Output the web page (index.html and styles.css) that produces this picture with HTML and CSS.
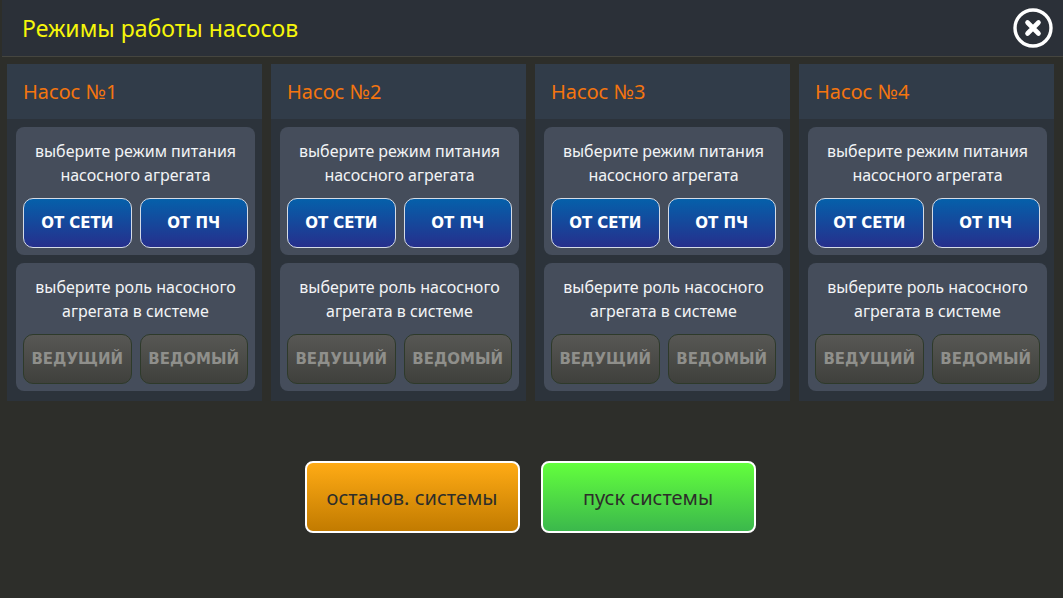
FILE: index.html
```html
<!DOCTYPE html>
<html lang="ru">
<head>
  <meta charset="UTF-8">
  <title>Режимы работы насосов</title>
  <link rel="stylesheet" href="styles.css">
</head>
<body>
  <header class="topbar">
    <h1>Режимы работы насосов</h1>
    <svg class="close" width="42" height="42" viewBox="0 0 42 42">
      <circle cx="21" cy="21" r="18" fill="none" stroke="#fff" stroke-width="3.4"/>
      <path d="M15.5 15.5 L26.5 26.5 M26.5 15.5 L15.5 26.5" stroke="#fff" stroke-width="4.6" stroke-linecap="round"/>
    </svg>
  </header>

  <div class="pumps">
    <!-- Pump 1 -->
    <section class="pump">
      <h2>Насос №1</h2>
      <div class="panel">
        <p>выберите режим питания<br>насосного агрегата</p>
        <div class="btns">
          <button class="blue">ОТ СЕТИ</button>
          <button class="blue">ОТ ПЧ</button>
        </div>
      </div>
      <div class="panel">
        <p>выберите роль насосного<br>агрегата в системе</p>
        <div class="btns">
          <button class="grey">ВЕДУЩИЙ</button>
          <button class="grey">ВЕДОМЫЙ</button>
        </div>
      </div>
    </section>

    <!-- Pump 2 -->
    <section class="pump">
      <h2>Насос №2</h2>
      <div class="panel">
        <p>выберите режим питания<br>насосного агрегата</p>
        <div class="btns">
          <button class="blue">ОТ СЕТИ</button>
          <button class="blue">ОТ ПЧ</button>
        </div>
      </div>
      <div class="panel">
        <p>выберите роль насосного<br>агрегата в системе</p>
        <div class="btns">
          <button class="grey">ВЕДУЩИЙ</button>
          <button class="grey">ВЕДОМЫЙ</button>
        </div>
      </div>
    </section>

    <!-- Pump 3 -->
    <section class="pump">
      <h2>Насос №3</h2>
      <div class="panel">
        <p>выберите режим питания<br>насосного агрегата</p>
        <div class="btns">
          <button class="blue">ОТ СЕТИ</button>
          <button class="blue">ОТ ПЧ</button>
        </div>
      </div>
      <div class="panel">
        <p>выберите роль насосного<br>агрегата в системе</p>
        <div class="btns">
          <button class="grey">ВЕДУЩИЙ</button>
          <button class="grey">ВЕДОМЫЙ</button>
        </div>
      </div>
    </section>

    <!-- Pump 4 -->
    <section class="pump">
      <h2>Насос №4</h2>
      <div class="panel">
        <p>выберите режим питания<br>насосного агрегата</p>
        <div class="btns">
          <button class="blue">ОТ СЕТИ</button>
          <button class="blue">ОТ ПЧ</button>
        </div>
      </div>
      <div class="panel">
        <p>выберите роль насосного<br>агрегата в системе</p>
        <div class="btns">
          <button class="grey">ВЕДУЩИЙ</button>
          <button class="grey">ВЕДОМЫЙ</button>
        </div>
      </div>
    </section>
  </div>

  <div class="actions">
    <button class="stop">останов. системы</button>
    <button class="start">пуск системы</button>
  </div>
</body>
</html>
```

FILE: styles.css
```css
html, body {
  height: 100%;
}

body {
  font-family: 'Noto Sans', sans-serif;
  background-color: #2d2e2a;
  color: #fff;
  margin: 0;
  padding: 0;
  overflow: hidden;
}

.topbar {
  display: flex;
  align-items: center;
  justify-content: space-between;
  height: 56px;
  margin-left: 2px;
  padding: 0 9px 0 20px;
  background-color: #2b3038;
  border-bottom: 1px solid #45453f;
}

.topbar h1 {
  margin: 0;
  font-size: 23px;
  font-weight: 400;
  color: #f6f60a;
}

.close {
  display: block;
}

.pumps {
  display: flex;
  gap: 9px;
  padding: 7px 9px 0 7px;
}

.pump {
  flex: 1;
  height: 337px;
  background-color: #2c333b;
}

.pump h2 {
  margin: 0 0 8px;
  height: 55px;
  line-height: 55px;
  padding-left: 16px;
  font-size: 20px;
  font-weight: 400;
  color: #f4750f;
  background-color: #313c49;
}

.panel {
  margin: 0 7px 8px 9px;
  padding: 12px 7px 8px;
  height: 128px;
  box-sizing: border-box;
  background-color: #454d5b;
  border-radius: 8px;
}

.panel p {
  margin: 0 0 11px;
  height: 48px;
  font-size: 16px;
  line-height: 24px;
  text-align: center;
  color: #f2f4f6;
}

.btns {
  display: flex;
  gap: 8px;
}

.btns button {
  flex: 1;
  height: 50px;
  padding: 0;
  border-radius: 10px;
  font-family: 'DejaVu Sans', sans-serif;
  font-size: 15px;
  font-weight: 700;
  cursor: pointer;
}

.blue {
  color: #fff;
  background: linear-gradient(#0560aa, #262f8c);
  border: 1px solid #d4dbe6;
}

.grey {
  color: #8f8f8b;
  background: linear-gradient(#575754, #3f403c);
  border: 1px solid #2e3a2a;
}

.actions {
  display: flex;
  justify-content: center;
  gap: 21px;
  margin: 60px 0 0 -3px;
}

.actions button {
  width: 215px;
  height: 72px;
  padding: 0;
  border: 2px solid #fff;
  border-radius: 8px;
  font-family: 'Noto Sans', sans-serif;
  font-size: 20px;
  color: #2d2e2a;
  cursor: pointer;
}

.stop {
  background: linear-gradient(#ffab15, #c27b00);
}

.start {
  background: linear-gradient(#63ff3d, #3bb84c);
}
```
